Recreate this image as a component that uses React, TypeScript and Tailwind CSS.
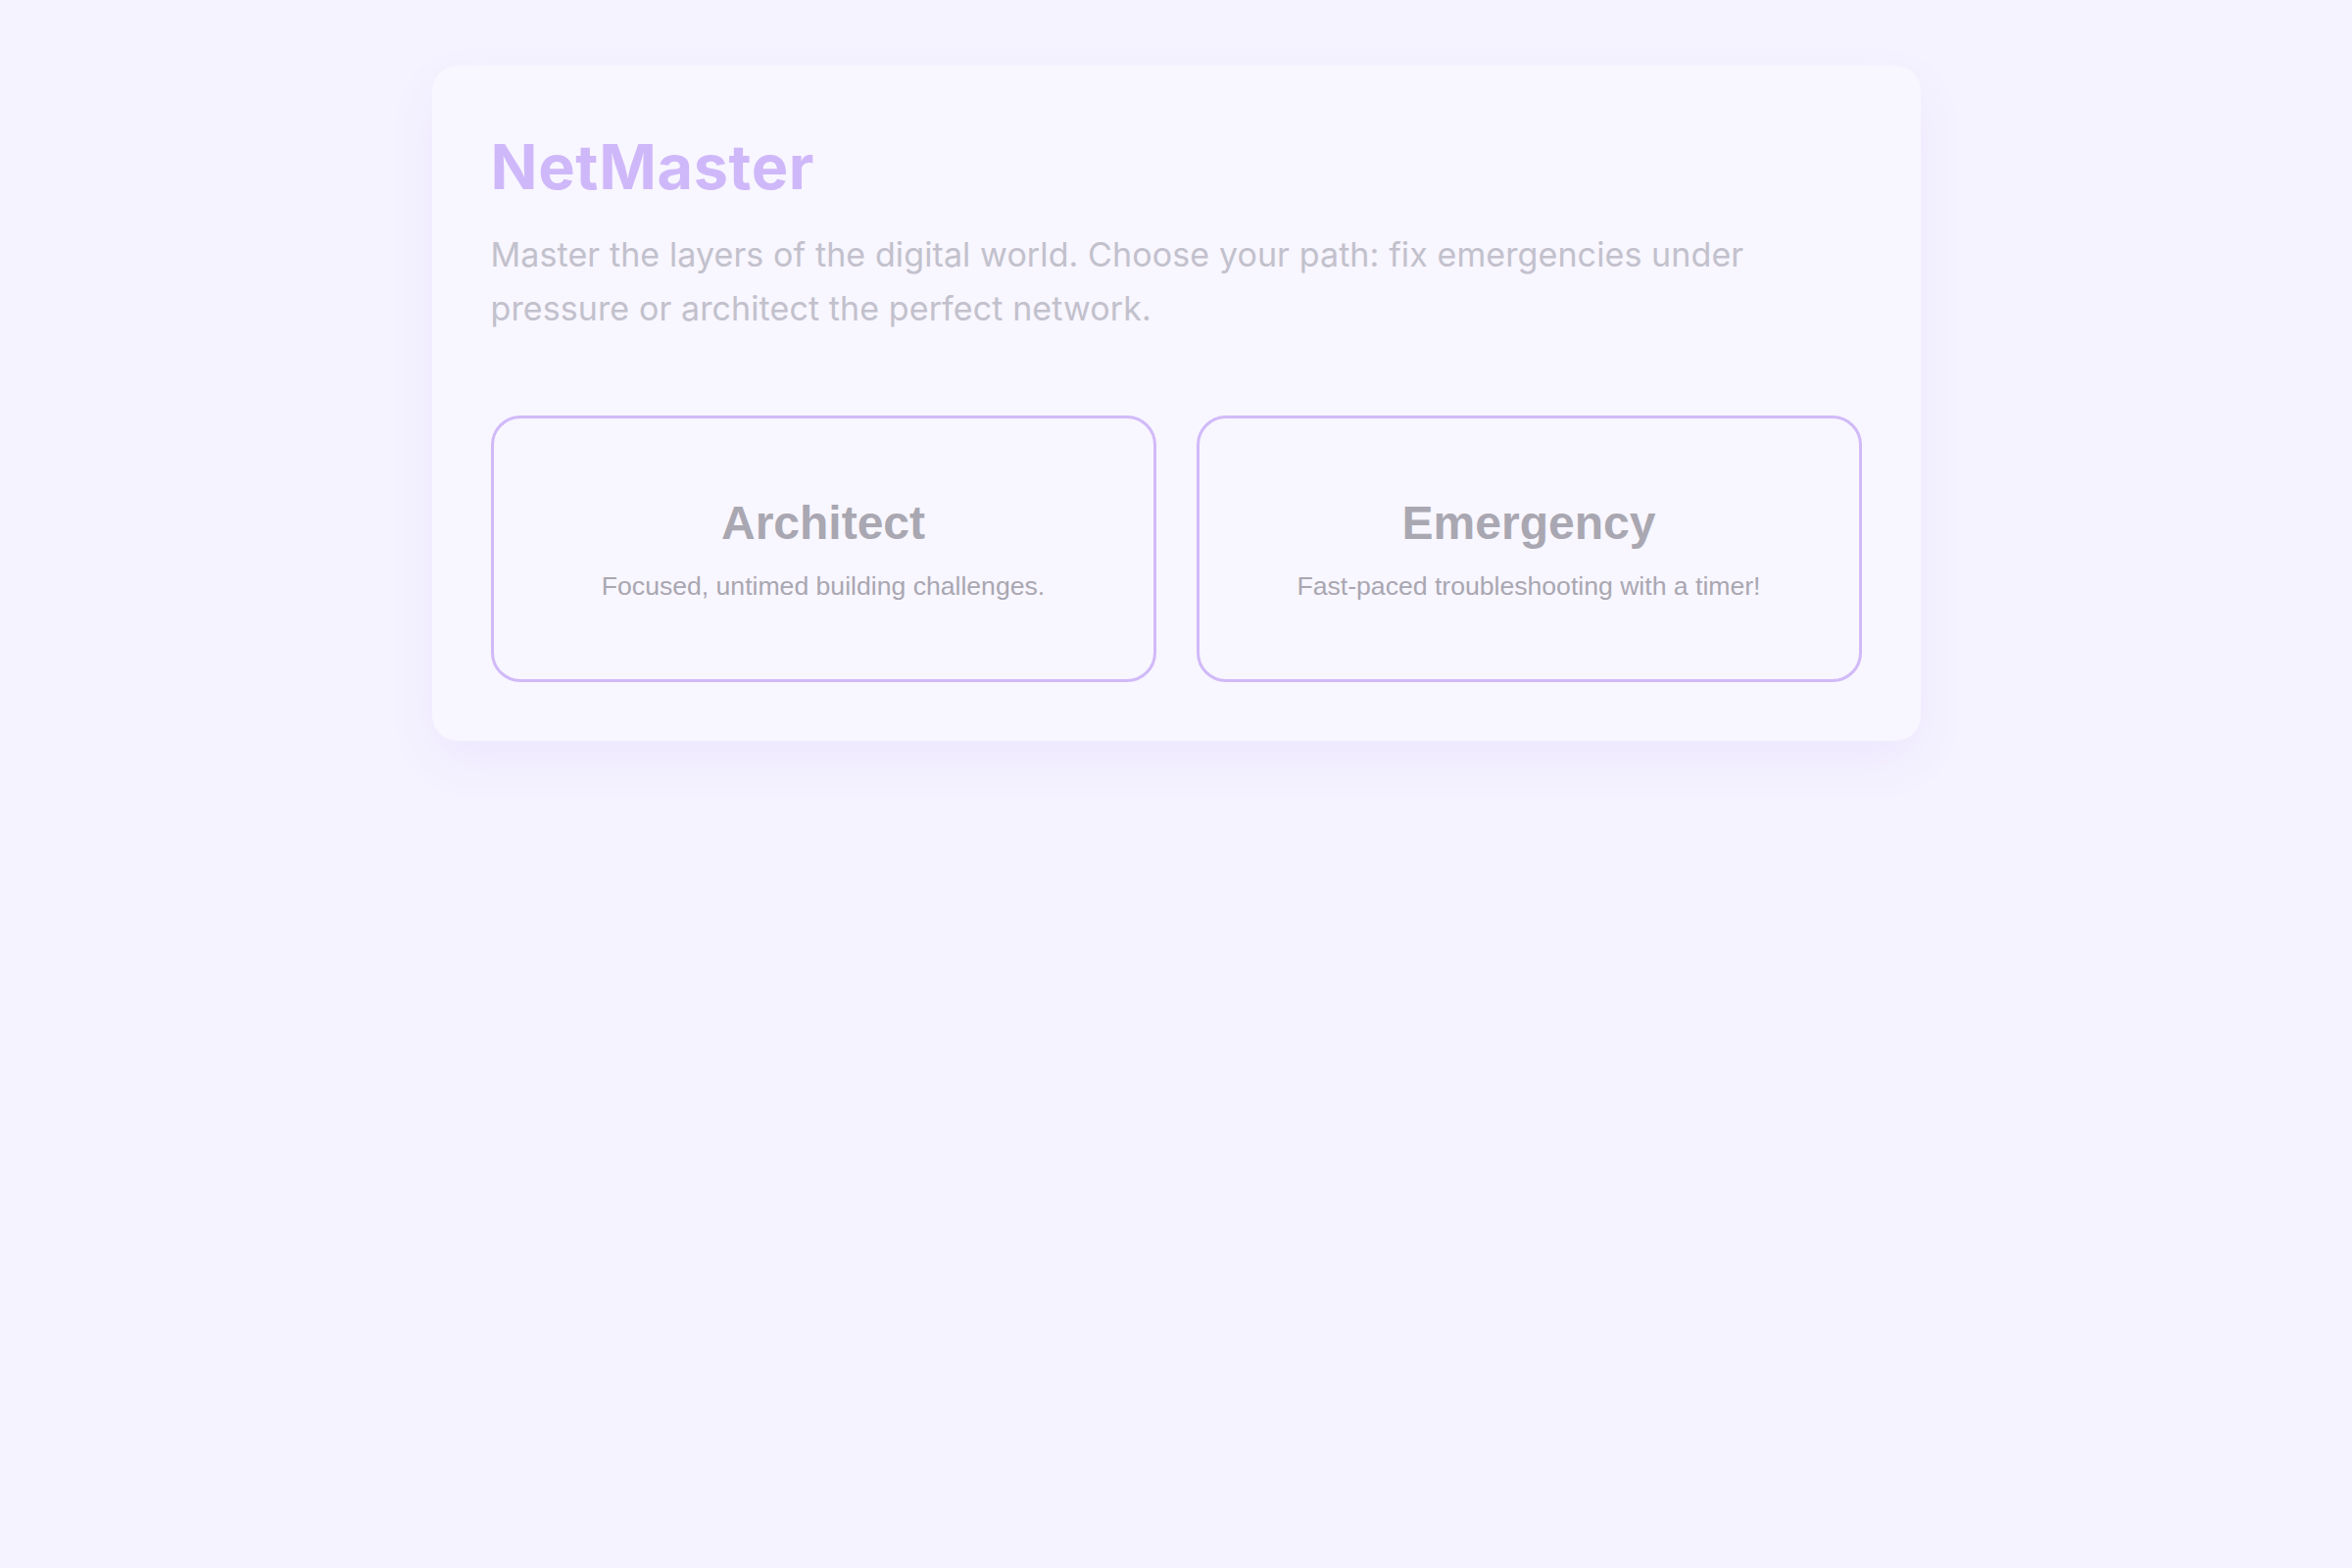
import React from "react";

function ModeCard({ title, desc }: { title: string; desc: string }) {
  return (
    <button
      type="button"
      className="flex h-[272px] flex-col items-center justify-center rounded-[30px] border-[3px] border-[#d1baf8] bg-[#f8f6ff] text-center"
      style={{ fontFamily: '"Liberation Sans", Arial, sans-serif' }}
    >
      <div className="text-[48px] font-bold leading-[55px] text-[#a9a7b1]">{title}</div>
      <div className="mt-[22px] text-[26.6px] leading-[31px] text-[#a9a7b1]">{desc}</div>
    </button>
  );
}

export default function App() {
  return (
    <div className="min-h-[1600px] w-full bg-[#f5f3ff] pt-[67px]">
      <div className="mx-auto w-[1519px] rounded-[26px] bg-[#f8f6ff] p-[60px] shadow-[0_20px_50px_rgba(139,92,246,0.07)]">
        <h1
          className="text-[63px] font-bold leading-[86px] tracking-[0.01em] text-[#cfb8f9]"
          style={{ fontFamily: 'Inter, "Noto Sans", sans-serif' }}
        >
          NetMaster
        </h1>
        <p
          className="mt-[19px] text-[34px] leading-[55px] tracking-[0.003em] text-[#c2c1cc]"
          style={{ fontFamily: 'Inter, "Noto Sans", sans-serif' }}
        >
          Master the layers of the digital world. Choose your path: fix emergencies under pressure or architect the
          perfect network.
        </p>
        <div className="mt-[82px] grid grid-cols-2 gap-[41px]">
          <ModeCard title="Architect" desc="Focused, untimed building challenges." />
          <ModeCard title="Emergency" desc="Fast-paced troubleshooting with a timer!" />
        </div>
      </div>
    </div>
  );
}
